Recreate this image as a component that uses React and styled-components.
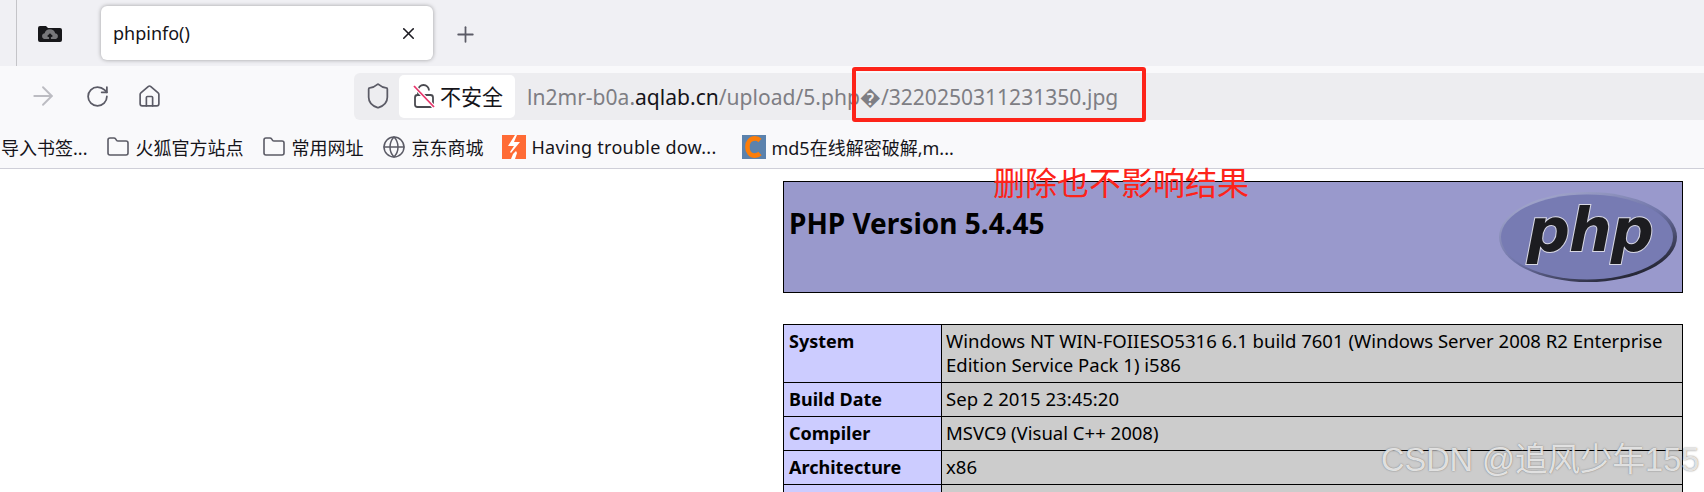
import styled, { createGlobalStyle } from "styled-components";
import { ArrowRight, Folder, Globe, House, Plus, RotateCw, Shield, X } from "lucide-react";

const GlobalStyle = createGlobalStyle`
    html, body {
        margin: 0;
        height: 492px;
        overflow: hidden;
        background: #fff;
    }
`;

const uiFont = `"Noto Sans", "Noto Sans CJK SC", sans-serif`;

const bookmarks = [
    { icon: null, label: "导入书签..." },
    { icon: "folder", label: "火狐官方站点" },
    { icon: "folder", label: "常用网址" },
    { icon: "globe", label: "京东商城" },
    { icon: "bolt", label: "Having trouble dow...", wide: true },
    { icon: "csdn", label: "md5在线解密破解,m..." },
];

const infoRows = [
    { name: "System", value: "Windows NT WIN-FOIIESO5316 6.1 build 7601 (Windows Server 2008 R2 Enterprise Edition Service Pack 1) i586", height: 58 },
    { name: "Build Date", value: "Sep 2 2015 23:45:20", height: 34 },
    { name: "Compiler", value: "MSVC9 (Visual C++ 2008)", height: 34 },
    { name: "Architecture", value: "x86", height: 34 },
    { name: "", value: "", height: 34 },
];

function CloudFolderIcon() {
    return (
        <svg width="24" height="18" viewBox="0 0 24 18">
            <path d="M0 4a2 2 0 0 1 2-2h6l2 2h12a2 2 0 0 1 2 2v10a2 2 0 0 1-2 2H2a2 2 0 0 1-2-2z" fill="#17171a" />
            <path d="M6 15a3 3 0 0 1 .6-5.8 5.5 5.5 0 0 1 10.6 0A3 3 0 0 1 18 15z" fill="#77777a" />
            <path d="M12 16v-5M9.8 12.6 12 10.4l2.2 2.2" stroke="#17171a" strokeWidth="1.8" fill="none" />
        </svg>
    );
}

function SlashedLockIcon() {
    return (
        <svg width="22" height="24" viewBox="0 0 22 24" fill="none">
            <path d="M5 10.5V6.5a5.5 5.5 0 0 1 11 0" stroke="#4a4a50" strokeWidth="1.8" />
            <rect x="2" y="11" width="18" height="12" rx="2.5" stroke="#4a4a50" strokeWidth="1.8" />
            <path d="M1 2 21 23" stroke="#fff" strokeWidth="4" />
            <path d="M1 2 21 23" stroke="#e8356b" strokeWidth="1.8" />
        </svg>
    );
}

function BoltIcon() {
    return (
        <svg width="24" height="24" viewBox="0 0 24 24">
            <rect width="24" height="24" fill="#ff6b35" />
            <path d="M13 0 6 11h6l-4 6 1 1 9-11h-6l3-7z" fill="#fff" />
            <path d="M9 24l2-5 3-3 1 2-2 6z" fill="#fff" />
        </svg>
    );
}

function CsdnIcon() {
    return (
        <svg width="24" height="24" viewBox="0 0 24 24">
            <rect width="24" height="24" fill="#5b82ad" />
            <path d="M18 5.5C16.5 4 15 3.4 13 3.4 8.6 3.4 5.4 7 5.4 12s3.2 8.6 7.6 8.6c2 0 3.500-.6 5-2.100" fill="none" stroke="#fb7d0a" strokeWidth="4.6" />
        </svg>
    );
}

function PhpLogo() {
    return (
        <LogoSvg width="180" height="92" viewBox="0 0 180 92">
            <defs>
                <linearGradient id="rim" x1="0.15" y1="0" x2="0.85" y2="1">
                    <stop offset="0" stopColor="#a9add0" />
                    <stop offset="0.5" stopColor="#6f74a8" />
                    <stop offset="1" stopColor="#15151c" />
                </linearGradient>
            </defs>
            <ellipse cx="90" cy="46" rx="89" ry="45" fill="url(#rim)" />
            <ellipse cx="89" cy="46" rx="86" ry="42.500" fill="#777bb3" />
            <LogoText x="29" y="60">php</LogoText>
        </LogoSvg>
    );
}

function BookmarkIcon({ type }) {
    if (type === "folder") return <Folder size={24} strokeWidth={1.6} color="#5b5b66" />;
    if (type === "globe") return <Globe size={24} strokeWidth={1.5} color="#5b5b66" />;
    if (type === "bolt") return <BoltIcon />;
    if (type === "csdn") return <CsdnIcon />;
    return null;
}

export default function App() {
    return (
        <Page>
            <GlobalStyle />
            <TabStrip>
                <StripDivider />
                <PinnedTab>
                    <CloudFolderIcon />
                </PinnedTab>
                <Tab>
                    <TabTitle>phpinfo()</TabTitle>
                    <X size={19} strokeWidth={2} color="#1c1b22" />
                </Tab>
                <NewTab>
                    <Plus size={25} strokeWidth={1.7} color="#5b5b66" />
                </NewTab>
            </TabStrip>
            <Toolbar>
                <NavButtons>
                    <ArrowRight size={30} strokeWidth={1.5} color="#bcbcc2" />
                    <RotateCw size={25} strokeWidth={1.7} color="#5b5b66" />
                    <House size={25} strokeWidth={1.6} color="#5b5b66" />
                </NavButtons>
                <UrlBar>
                    <Shield size={28} strokeWidth={1.5} color="#5b5b66" />
                    <SecurityChip>
                        <SlashedLockIcon />
                        <span>不安全</span>
                    </SecurityChip>
                    <UrlText>
                        ln2mr-b0a.<strong>aqlab.cn</strong>/upload/5.php�/3220250311231350.jpg
                    </UrlText>
                </UrlBar>
            </Toolbar>
            <BookmarksBar>
                {bookmarks.map((item) => (
                    <Bookmark key={item.label} $wide={item.wide}>
                        <BookmarkIcon type={item.icon} />
                        <span>{item.label}</span>
                    </Bookmark>
                ))}
            </BookmarksBar>
            <Content>
                <Center>
                    <Header>
                        <h1>PHP Version 5.4.45</h1>
                        <PhpLogo />
                    </Header>
                    <InfoTable>
                        <tbody>
                            {infoRows.map((row, i) => (
                                <InfoRow key={i} $height={row.height}>
                                    <NameCell>{row.name}</NameCell>
                                    <ValueCell>{row.value}</ValueCell>
                                </InfoRow>
                            ))}
                        </tbody>
                    </InfoTable>
                </Center>
            </Content>
            <RedBox />
            <Annotation>删除也不影响结果</Annotation>
            <Watermark>CSDN @追风少年155</Watermark>
        </Page>
    );
}

const Page = styled.div`
    position: relative;
    width: 1704px;
    height: 492px;
    overflow: hidden;
    font-family: ${uiFont};
    color: #15141a;
`;

const TabStrip = styled.div`
    display: flex;
    align-items: flex-start;
    height: 66px;
    background-color: #f0f0f4;
`;

const StripDivider = styled.div`
    width: 1px;
    height: 66px;
    margin-left: 16px;
    background-color: #c4c4c8;
`;

const PinnedTab = styled.div`
    display: flex;
    align-items: center;
    justify-content: center;
    width: 84px;
    height: 66px;
    padding-right: 18px;
    box-sizing: border-box;
`;

const Tab = styled.div`
    display: flex;
    align-items: center;
    justify-content: space-between;
    box-sizing: border-box;
    width: 332px;
    height: 54px;
    margin-top: 6px;
    padding: 0 15px 0 12px;
    background-color: #fff;
    border-radius: 6px;
    box-shadow: 0 0 4px rgba(0, 0, 0, 0.35);
`;

const TabTitle = styled.span`
    font-size: 18px;
`;

const NewTab = styled.div`
    display: flex;
    align-items: center;
    justify-content: center;
    width: 64px;
    height: 68px;
`;

const Toolbar = styled.div`
    display: flex;
    align-items: center;
    height: 60px;
    background-color: #f9f9fb;
`;

const NavButtons = styled.div`
    display: flex;
    align-items: center;
    gap: 27px;
    width: 354px;
    padding-left: 28px;
    box-sizing: border-box;
`;

const UrlBar = styled.div`
    display: flex;
    align-items: center;
    width: 1350px;
    height: 47px;
    padding-left: 10px;
    box-sizing: border-box;
    background-color: #ededf0;
    border-radius: 6px 0 0 6px;
    font-size: 21.05px;
`;

const SecurityChip = styled.div`
    display: flex;
    align-items: center;
    gap: 5px;
    width: 116px;
    height: 43px;
    margin-left: 7px;
    padding-left: 14px;
    box-sizing: border-box;
    background-color: #fff;
    border-radius: 5px;
`;

const UrlText = styled.div`
    margin-left: 12px;
    color: #7e7e84;
    white-space: nowrap;

    strong {
        font-weight: 400;
        color: #15141a;
    }
`;

const BookmarksBar = styled.div`
    display: flex;
    align-items: center;
    gap: 19px;
    height: 42px;
    padding-left: 1px;
    background-color: #f9f9fb;
    border-bottom: 1px solid #cfcfd8;
    font-size: 18px;
`;

const Bookmark = styled.div`
    display: flex;
    align-items: center;
    gap: 5px;
    white-space: nowrap;
    margin-right: ${(props) => (props.$wide ? "7px" : "0")};
    letter-spacing: ${(props) => (props.$wide ? "0.25px" : "normal")};
`;

const Content = styled.div`
    padding-left: 783px;
    padding-top: 12px;
    background-color: #fff;
    color: #000;
`;

const Center = styled.div`
    width: 900px;
`;

const Header = styled.div`
    display: flex;
    align-items: center;
    justify-content: space-between;
    box-sizing: border-box;
    height: 112px;
    margin-bottom: 31px;
    padding: 0 4px 0 5px;
    background-color: #9999cc;
    border: 1px solid #000;

    h1 {
        align-self: flex-start;
        margin: 23px 0 0;
        font-size: 28px;
        font-weight: 700;
        line-height: 36px;
    }
`;

const LogoSvg = styled.svg`
    display: block;
`;

const LogoText = styled.text`
    font-family: "DejaVu Sans", sans-serif;
    font-size: 60px;
    font-weight: 700;
    font-style: italic;
    letter-spacing: -1px;
    fill: #1c1c20;
    stroke: #d8d8e4;
    stroke-width: 2px;
    paint-order: stroke;
`;

const InfoTable = styled.table`
    width: 900px;
    table-layout: fixed;
    border-collapse: collapse;
    font-size: 18.55px;
    line-height: 24px;
`;

const InfoRow = styled.tr`
    height: ${(props) => props.$height}px;
`;

const NameCell = styled.td`
    width: 147px;
    padding: 4px 5px 2px;
    vertical-align: top;
    font-size: 18px;
    font-weight: 700;
    background-color: #ccccff;
    border: 1px solid #000;
`;

const ValueCell = styled.td`
    padding: 4px 5px 2px 4px;
    vertical-align: top;
    background-color: #cccccc;
    border: 1px solid #000;
`;

const RedBox = styled.div`
    position: absolute;
    left: 852px;
    top: 67px;
    width: 294px;
    height: 55px;
    box-sizing: border-box;
    border: 4px solid #fd2319;
    border-radius: 3px;
`;

const Annotation = styled.div`
    position: absolute;
    left: 993px;
    top: 158px;
    font-family: "Noto Sans CJK SC", sans-serif;
    font-size: 32px;
    font-weight: 400;
    line-height: 46px;
    color: #fd2319;
    white-space: nowrap;
`;

const Watermark = styled.div`
    position: absolute;
    left: 1381px;
    top: 440px;
    font-family: "Liberation Sans", "Noto Sans CJK SC", sans-serif;
    font-size: 32.5px;
    line-height: 40px;
    color: rgba(255, 255, 255, 0.8);
    text-shadow: 0 0 1.5px rgba(90, 90, 90, 0.9);
    white-space: nowrap;
`;
